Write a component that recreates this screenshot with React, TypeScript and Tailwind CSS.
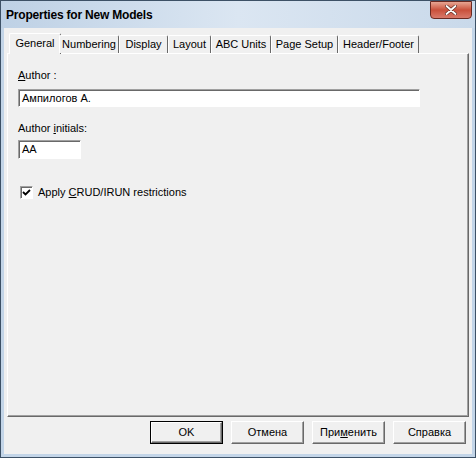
import React from 'react';

const tabs = [
  { label: 'General', w: 'w-[52px]', active: true },
  { label: 'Numbering', w: 'w-[60px]' },
  { label: 'Display', w: 'w-[49px]' },
  { label: 'Layout', w: 'w-[43px]' },
  { label: 'ABC Units', w: 'w-[60px]' },
  { label: 'Page Setup', w: 'w-[67px]' },
  { label: 'Header/Footer', w: 'w-[81px]' },
];

function Button({ children, isDefault = false }: { children: React.ReactNode; isDefault?: boolean }) {
  return (
    <div
      className={`w-[73px] h-[23px] flex items-center justify-center bg-[#f0f0f0] ${
        isDefault ? 'border border-black' : ''
      }`}
    >
      <div className="w-full h-full flex items-center justify-center border-t border-l border-white border-r border-b border-r-[#696969] border-b-[#696969] shadow-[inset_-1px_-1px_0_#a0a0a0] text-[11px] text-black">
        {children}
      </div>
    </div>
  );
}

export default function App() {
  return (
    <div
      className="w-[476px] h-[458px] border border-[#3d5166] bg-[#c3d5e8] flex flex-col overflow-hidden"
      style={{ fontFamily: '"Liberation Sans", Arial, sans-serif' }}
    >
      {/* title bar */}
      <div className="h-[27px] shrink-0 relative flex items-center pl-[5px] bg-gradient-to-r from-[#bed1e5] via-[#dbe6f2] to-[#c9d9ea]">
        <span className="text-[12px] font-bold text-black tracking-[-0.2px]">Properties for New Models</span>
        <div className="absolute right-[3px] top-0 w-[42px] h-[18px] rounded-b-[4px] border border-[#6b2a22] bg-gradient-to-b from-[#e7a593] via-[#c9503b] to-[#d9796a] flex items-center justify-center">
          <svg width="12" height="10" viewBox="0 0 12 10">
            <path d="M1.5 1 L10.5 9 M10.5 1 L1.5 9" stroke="#5a2a22" strokeWidth="3.2" strokeLinecap="round" />
            <path d="M1.5 1 L10.5 9 M10.5 1 L1.5 9" stroke="#ffffff" strokeWidth="1.8" strokeLinecap="round" />
          </svg>
        </div>
      </div>

      {/* client area */}
      <div className="flex-1 mx-[3px] mb-[3px] bg-[#f0f0f0] flex flex-col pt-[5px] pl-[3px] pr-[3px] pb-[10px] text-[11px] text-black">
        {/* tabs */}
        <div className="h-[20px] flex items-end pl-[2px] relative z-10">
          {tabs.map((t) =>
            t.active ? (
              <div
                key={t.label}
                className={`${t.w} h-[21px] -mb-px -mr-[2px] bg-[#f0f0f0] border-t border-l border-white border-r border-r-[#696969] rounded-t-[2px] flex items-center justify-center pb-[2px]`}
              >
                {t.label}
              </div>
            ) : (
              <div
                key={t.label}
                className={`${t.w} h-[18px] bg-[#f0f0f0] border-t border-l border-white border-r border-r-[#696969] rounded-t-[2px] flex items-center justify-center`}
              >
                {t.label}
              </div>
            )
          )}
        </div>

        {/* panel */}
        <div className="flex-1 border-t border-l border-white border-r border-b border-r-[#696969] border-b-[#696969] shadow-[inset_-1px_-1px_0_#a0a0a0] pl-[10px] pt-[15px] flex flex-col">
          <div className="leading-[13px]">
            <span className="underline">A</span>uthor :
          </div>
          <div className="mt-[7px] w-[402px] h-[18px] bg-white border-t border-l border-[#a0a0a0] border-r border-b border-r-white border-b-white shadow-[inset_1px_1px_0_#696969] flex items-center pl-[3px]">
            Ампилогов А.
          </div>
          <div className="mt-[15px] leading-[13px]">
            Author <span className="underline">i</span>nitials:
          </div>
          <div className="mt-[5px] w-[63px] h-[19px] bg-white border-t border-l border-[#a0a0a0] border-r border-b border-r-white border-b-white shadow-[inset_1px_1px_0_#696969] flex items-center pl-[3px]">
            AA
          </div>
          <div className="mt-[25px] flex items-center pl-[2px]">
            <div className="w-[13px] h-[13px] bg-white border-t border-l border-[#a0a0a0] border-r border-b border-r-white border-b-white shadow-[inset_1px_1px_0_#696969] flex items-center justify-center">
              <svg width="9" height="9" viewBox="0 0 9 9">
                <path d="M1 4 L3.5 6.5 L8 2" stroke="#000" strokeWidth="1.8" fill="none" />
              </svg>
            </div>
            <span className="ml-[5px]">
              Apply <span className="underline">C</span>RUD/IRUN restrictions
            </span>
          </div>
        </div>

        {/* buttons */}
        <div className="mt-[4px] flex justify-end gap-[8px] pr-[3px]">
          <Button isDefault>OK</Button>
          <Button>Отмена</Button>
          <Button>
            При<span className="underline">м</span>енить
          </Button>
          <Button>Справка</Button>
        </div>
      </div>
    </div>
  );
}
